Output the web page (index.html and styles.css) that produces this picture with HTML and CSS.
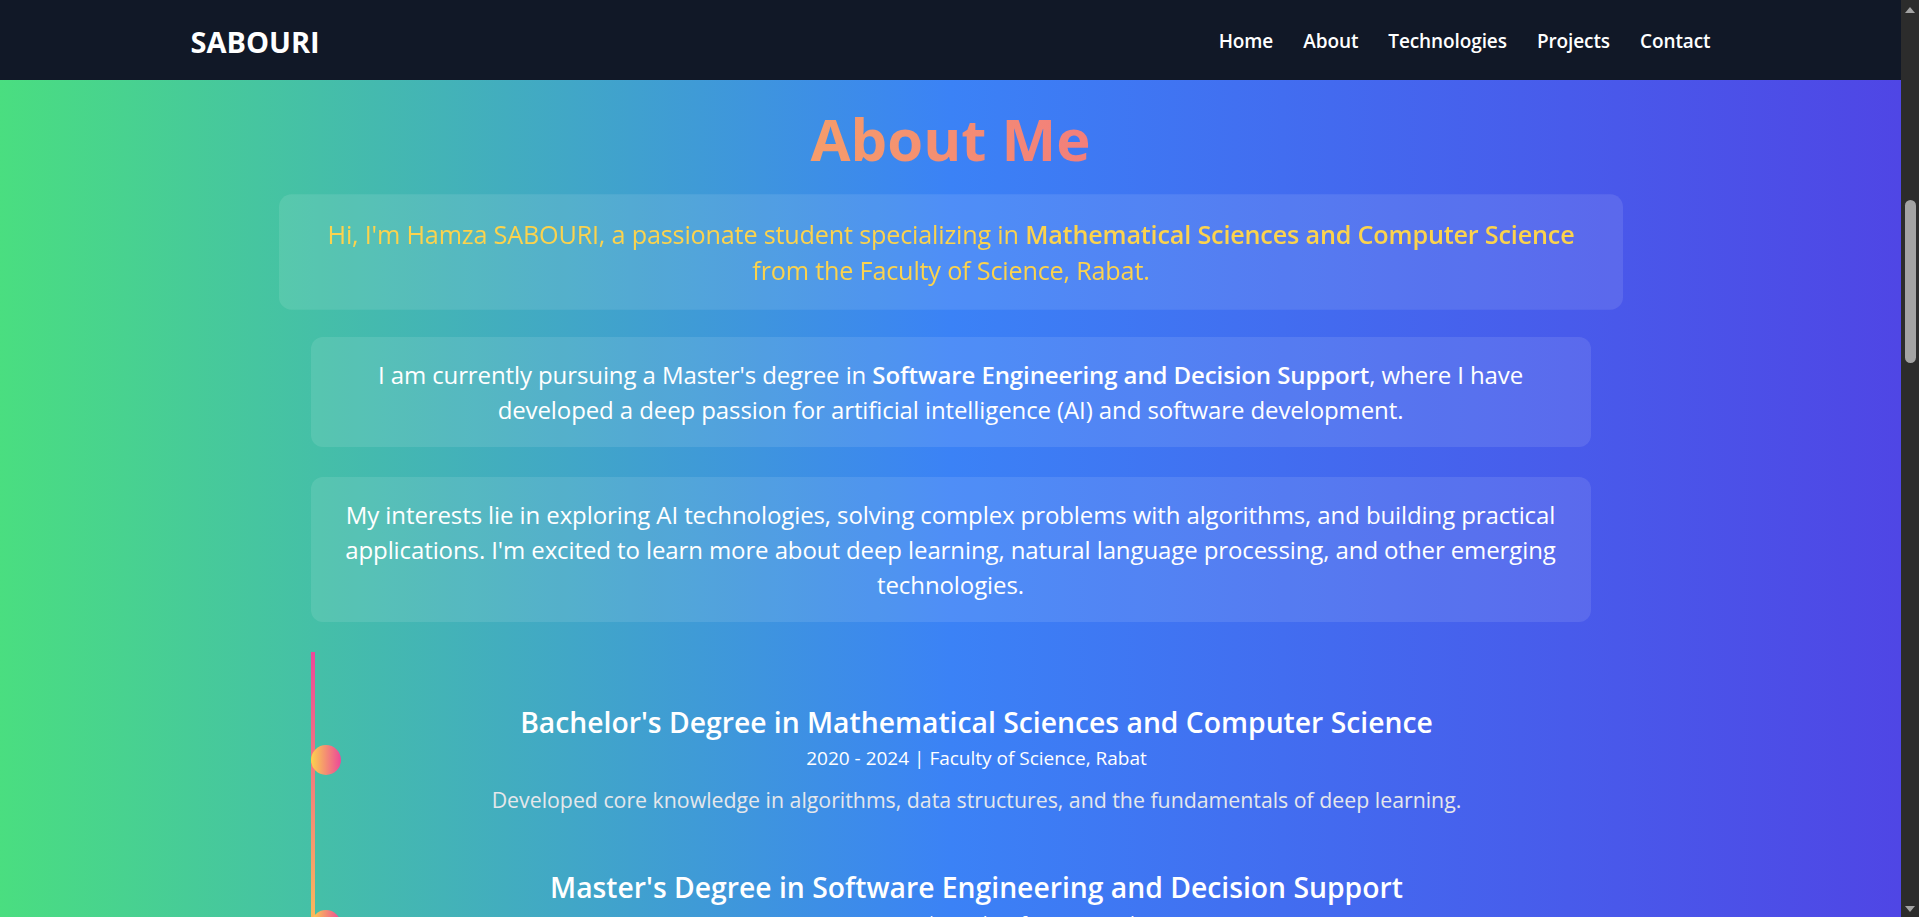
FILE: index.html
```html
<!DOCTYPE html>
<html lang="en">
<head>
<meta charset="utf-8">
<title>SABOURI - About</title>
<link rel="stylesheet" href="styles.css">
</head>
<body>
<div class="page">
  <header class="topbar">
    <div class="topbar-inner">
      <a class="logo" href="#">SABOURI</a>
      <nav class="nav">
        <a href="#">Home</a>
        <a href="#">About</a>
        <a href="#">Technologies</a>
        <a href="#">Projects</a>
        <a href="#">Contact</a>
      </nav>
    </div>
  </header>
  <main class="about">
    <div class="container">
      <h2 class="title">About Me</h2>
      <p class="card card-intro">Hi, I'm Hamza SABOURI, a passionate student specializing in <strong>Mathematical Sciences and Computer Science</strong> from the Faculty of Science, Rabat.</p>
      <p class="card">I am currently pursuing a Master's degree in <strong>Software Engineering and Decision Support</strong>, where I have developed a deep passion for artificial intelligence (AI) and software development.</p>
      <p class="card">My interests lie in exploring AI technologies, solving complex problems with algorithms, and building practical applications. I'm excited to learn more about deep learning, natural language processing, and other emerging technologies.</p>
      <div class="timeline">
        <div class="item">
          <span class="dot"></span>
          <h3>Bachelor's Degree in Mathematical Sciences and Computer Science</h3>
          <p class="meta">2020 - 2024 | Faculty of Science, Rabat</p>
          <p class="desc">Developed core knowledge in algorithms, data structures, and the fundamentals of deep learning.</p>
        </div>
        <div class="item">
          <span class="dot"></span>
          <h3>Master's Degree in Software Engineering and Decision Support</h3>
          <p class="meta">2024 - Present | Faculty of Science, Rabat</p>
          <p class="desc">Focusing on artificial intelligence, machine learning and decision support systems.</p>
        </div>
      </div>
    </div>
  </main>
</div>
<div class="scrollbar" aria-hidden="true">
  <span class="sb-arrow sb-up"></span>
  <span class="sb-thumb"></span>
  <span class="sb-fill"></span>
  <span class="sb-arrow sb-down"></span>
</div>
</body>
</html>
```
FILE: styles.css
```css
::-webkit-scrollbar { width: 0; height: 0; }

body {
  margin: 0;
  font-family: "Open Sans", "Noto Sans", sans-serif;
  color: #fff;
  background: #4f46e5;
}

.page {
  margin-right: 18px;
  background: linear-gradient(to right, #4ade80, #3b82f6, #4f46e5);
}

.topbar {
  background: #111827;
  height: 80px;
}
.topbar-inner {
  max-width: 1536px;
  margin: 0 auto;
  padding: 0 8px;
  height: 100%;
  box-sizing: border-box;
  display: flex;
  align-items: center;
  justify-content: space-between;
}
.logo {
  color: #fff;
  text-decoration: none;
  font-size: 29px;
  font-weight: 700;
  padding-top: 2px;
}
.nav { display: flex; gap: 30px; padding-top: 2px; }
.nav a {
  color: #fff;
  text-decoration: none;
  font-size: 19px;
  font-weight: 600;
  letter-spacing: -0.1px;
}

.about { padding: 23px 0 80px; }
.container { max-width: 1280px; margin: 0 auto; }

.title {
  margin: 0 0 22px;
  font-size: 58px;
  line-height: 72px;
  font-weight: 700;
  text-align: center;
  background: linear-gradient(to right, #fcd34d, #ec4899);
  -webkit-background-clip: text;
  background-clip: text;
  color: transparent;
}

.card {
  margin: 0 0 30px;
  padding: 20px 28px;
  background: rgba(255, 255, 255, 0.1);
  border-radius: 12px;
  font-size: 24px;
  line-height: 35px;
  text-align: center;
  letter-spacing: -0.1px;
}
.card strong { font-weight: 600; }
.card-intro {
  color: #fcd34d;
  letter-spacing: -0.18px;
  transform: scale(1.05);
}

.timeline {
  border-left: 4px solid transparent;
  border-image: linear-gradient(to bottom, #ec4899, #fcd34d) 1;
}
.item {
  position: relative;
  padding: 50px 0 1px 48px;
  text-align: center;
}
.dot {
  position: absolute;
  left: -4px;
  top: 93px;
  width: 30px;
  height: 30px;
  border-radius: 50%;
  background: linear-gradient(to right, #fcd34d, #ec4899);
}
.item h3 {
  margin: 0;
  font-size: 28.3px;
  line-height: 40px;
  font-weight: 600;
}
.meta {
  margin: 2px 0 0;
  font-size: 19px;
  line-height: 28px;
}
.desc {
  margin: 12px 0 0;
  font-size: 21.3px;
  line-height: 32px;
  color: #e5e7eb;
}

.scrollbar {
  position: fixed;
  top: 0;
  right: 0;
  bottom: 0;
  width: 18px;
  background: #2c2c2c;
  display: flex;
  flex-direction: column;
  align-items: center;
}
.sb-arrow {
  width: 0;
  height: 0;
  border-left: 5px solid transparent;
  border-right: 5px solid transparent;
}
.sb-up {
  margin-top: 7px;
  border-bottom: 6px solid #a3a3a3;
}
.sb-down {
  margin-bottom: 5px;
  border-top: 6px solid #a3a3a3;
}
.sb-thumb {
  margin-top: 187px;
  width: 11px;
  height: 163px;
  border-radius: 6px;
  background: #a3a3a3;
}
.sb-fill { flex: 1; }
```
